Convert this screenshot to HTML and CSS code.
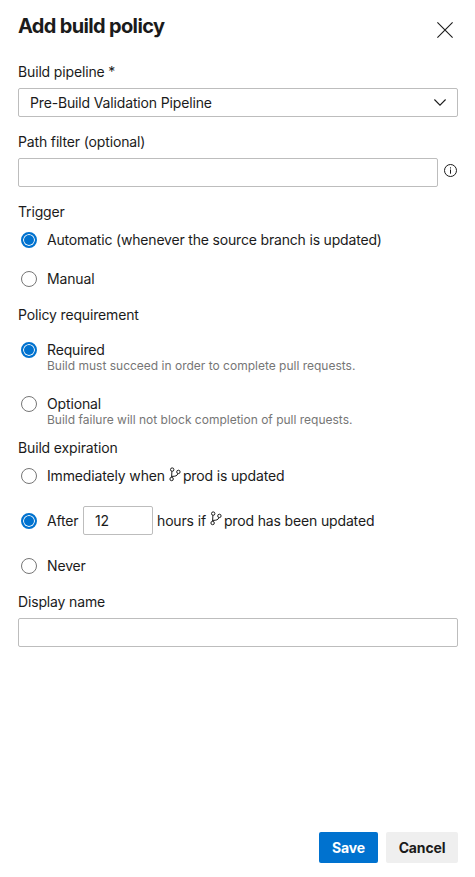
FILE: index.html
```html
<!DOCTYPE html>
<html lang="en">
<head>
<meta charset="utf-8">
<title>Add build policy</title>
<link rel="stylesheet" href="styles.css">
</head>
<body>
<svg class="defs" aria-hidden="true">
  <symbol id="branch" viewBox="0 0 12 15">
    <g fill="none" stroke="currentColor" stroke-width="1">
      <circle cx="3.2" cy="2.6" r="1.7"/>
      <circle cx="2.6" cy="12" r="1.7"/>
      <circle cx="9.4" cy="4.9" r="1.7"/>
      <path d="M2.9 4.3L2.6 10.3M8.9 6.6C8.3 8.8 6.4 9.4 2.8 9.4"/>
    </g>
  </symbol>
</svg>
<form class="panel">
  <header class="header">
    <h1 class="title">Add build policy</h1>
    <button class="close" type="button" aria-label="Close">
      <svg width="16" height="16" viewBox="0 0 16 16"><path d="M.4.4l15.2 15.2M15.6.4L.4 15.6" fill="none" stroke="currentColor" stroke-width="1.1"/></svg>
    </button>
  </header>

  <section class="field">
    <div class="label">Build pipeline *</div>
    <div class="box select">
      <span class="select-value">Pre-Build Validation Pipeline</span>
      <svg width="12" height="7" viewBox="0 0 12 7"><path d="M.4.5L6 6.1 11.6.5" fill="none" stroke="currentColor" stroke-width="1.1"/></svg>
    </div>
  </section>

  <section class="field">
    <div class="label path-label">Path filter (optional)</div>
    <div class="path-row">
      <div class="box path-box"></div>
      <svg class="info" width="14" height="14" viewBox="0 0 14 14"><circle cx="6.5" cy="6.5" r="6" fill="none" stroke="currentColor"/><path d="M6.5 5.5v4.2M6.5 3.3v1.2" stroke="currentColor"/></svg>
    </div>
  </section>

  <section class="group">
    <div class="label">Trigger</div>
    <div class="option automatic"><span class="radio checked"></span><span class="text auto-text">Automatic (whenever the source branch is updated)</span></div>
    <div class="option manual"><span class="radio"></span><span class="text">Manual</span></div>
  </section>

  <section class="group policy">
    <div class="label policy-label">Policy requirement</div>
    <div class="option required"><span class="radio checked"></span><span class="text">Required</span></div>
    <div class="description">Build must succeed in order to complete pull requests.</div>
    <div class="option optional"><span class="radio"></span><span class="text">Optional</span></div>
    <div class="description">Build failure will not block completion of pull requests.</div>
  </section>

  <section class="group expiration">
    <div class="label">Build expiration</div>
    <div class="option immediate"><span class="radio"></span><span class="text">Immediately when</span><svg class="branch"><use href="#branch"/></svg><span class="text">prod is updated</span></div>
    <div class="option after"><span class="radio checked"></span><span class="text after-text">After</span><span class="box hours">12</span><span class="text">hours if</span><svg class="branch"><use href="#branch"/></svg><span class="text">prod has been updated</span></div>
    <div class="option never"><span class="radio"></span><span class="text">Never</span></div>
  </section>

  <section class="field display">
    <div class="label">Display name</div>
    <div class="box"></div>
  </section>

  <footer class="actions">
    <button class="button save" type="button">Save</button>
    <button class="button cancel" type="button">Cancel</button>
  </footer>
</form>
</body>
</html>
```
FILE: styles.css
```css
* { box-sizing: border-box; }
body {
  margin: 0;
  background: #fff;
  color: #1b1b1b;
  font: 14px/20px Inter, "Liberation Sans", sans-serif;
  letter-spacing: -0.15px;
}
.defs { display: none; }
.panel {
  display: flex;
  flex-direction: column;
  height: 877px;
  padding: 12px 17px 14px 18px;
}
.header {
  display: flex;
  justify-content: space-between;
  height: 50px;
}
.title {
  margin: 0;
  font-size: 20px;
  line-height: 28px;
  font-weight: 700;
  letter-spacing: -0.66px;
}
.close {
  display: flex;
  width: 16px;
  height: 16px;
  margin: 10px 5px 0 0;
  padding: 0;
  border: 0;
  background: none;
  color: inherit;
}
.label, .text { white-space: nowrap; }
.label { height: 20px; }
.auto-text { letter-spacing: -0.18px; }
.after-text { width: 32px; }
.field { margin-bottom: 15px; }
.box {
  height: 29px;
  margin-top: 6px;
  border: 1px solid #bdbdbd;
  border-radius: 2px;
  background: #fff;
}
.select {
  display: flex;
  align-items: center;
  justify-content: space-between;
  padding: 0 11px;
}
.path-row { display: flex; }
.path-box { width: 420px; }
.info { margin: 12px 0 0 6px; }
.option { display: flex; align-items: center; height: 20px; }
.radio {
  flex: none;
  width: 16px;
  height: 16px;
  margin: 0 10px 0 3px;
  border: 1px solid #767676;
  border-radius: 50%;
}
.radio.checked {
  border: 2px solid #0072cf;
  background: #0072cf;
  box-shadow: inset 0 0 0 1px #fff;
}
.automatic { margin-top: 8px; }
.manual { margin-top: 19px; }
.policy { margin-top: 16px; }
.required { margin-top: 15px; }
.optional { margin-top: 20px; }
.description {
  height: 14px;
  margin-left: 29px;
  color: #767676;
  font-size: 12px;
  line-height: 12px;
  letter-spacing: 0;
  white-space: nowrap;
}
.expiration { margin-top: 10px; }
.immediate { margin-top: 8px; }
.after { height: 29px; margin-top: 20px; }
.after .box { margin: 0 4px; }
.hours { width: 70px; padding-left: 11px; line-height: 27px; }
.never { margin-top: 21px; }
.branch { width: 12px; height: 15px; margin: -4px 2px 0 4px; }
.display { margin-top: 16px; }
.actions {
  display: flex;
  justify-content: flex-end;
  gap: 8px;
  margin-top: auto;
}
.button {
  height: 31px;
  padding: 0;
  border: 0;
  border-radius: 2px;
  font: 700 14px/31px Inter, "Liberation Sans", sans-serif;
  letter-spacing: -0.15px;
}
.save { width: 59px; background: #0072cf; color: #fff; }
.cancel { width: 72px; background: #efefef; color: #1b1b1b; }
```
